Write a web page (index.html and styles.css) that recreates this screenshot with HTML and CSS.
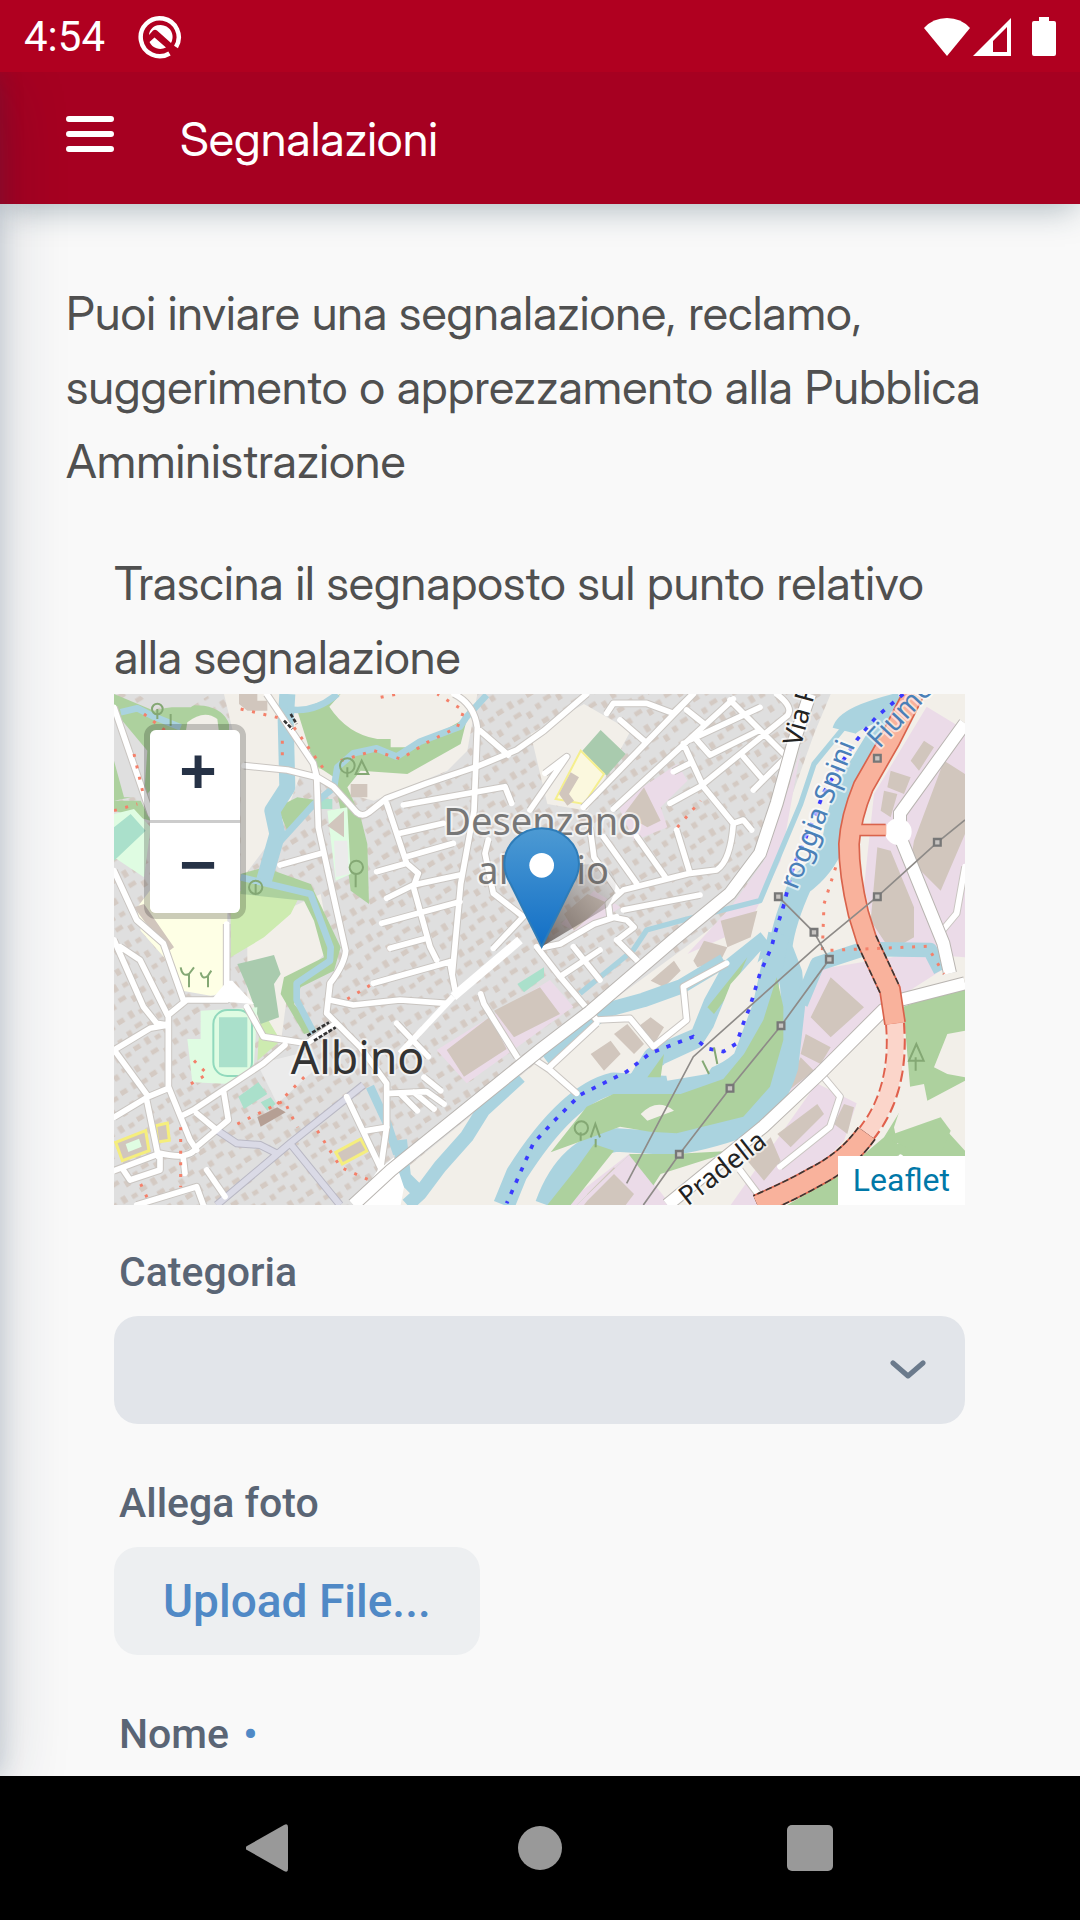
FILE: index.html
```html
<!DOCTYPE html>
<html lang="it">
<head>
<meta charset="utf-8">
<meta name="viewport" content="width=device-width, initial-scale=1">
<title>Segnalazioni</title>
<link rel="stylesheet" href="styles.css">
</head>
<body>
<div class="device">
  <div class="status-bar">
    <span class="clock">4:54</span>
    <svg class="status-logo" viewBox="0 0 44 44" width="44" height="44" aria-hidden="true">
      <path d="M31.500 38.500A19 19 0 1 1 38 32" fill="none" stroke="#fff" stroke-width="4.500"/>
      <path d="M12 16A12 12 0 0 1 33 28L19 15.500q-2-1.500-4 0l-4 4.500q0-2 1-4zM11.500 27l5-4.500L28 32.500a12 12 0 0 1-16.500-5.500z" fill="#fff"/>
    </svg>
    <div class="status-icons">
      <svg viewBox="0 0 46 40" width="46" height="40" aria-hidden="true"><path d="M0 11Q9 1 23 1t23 10L23 39z" fill="#fff"/></svg>
      <svg viewBox="0 0 38 40" width="38" height="40" aria-hidden="true"><path fill-rule="evenodd" d="M0 39L38 1v38zM20 24v11h14V10z" fill="#fff"/></svg>
      <svg class="battery" viewBox="0 0 24 40" width="24" height="40" aria-hidden="true"><path d="M7 0h10v4h5q2 0 2 2v31q0 2-2 2H2q-2 0-2-2V6q0-2 2-2h5z" fill="#fff"/></svg>
    </div>
  </div>

  <div class="app">
    <header class="app-header">
      <button class="menu-button" type="button" aria-label="Menu">
        <svg viewBox="0 0 48 38" width="48" height="38"><path d="M3 4h42M3 19h42M3 34h42" stroke="#fff" stroke-width="6" stroke-linecap="round"/></svg>
      </button>
      <h1 class="app-title">Segnalazioni</h1>
    </header>

    <main class="content">
      <p class="text">Puoi inviare una segnalazione, reclamo, suggerimento o apprezzamento alla Pubblica Amministrazione</p>
      <form class="report-form">
        <p class="text">Trascina il segnaposto sul punto relativo alla segnalazione</p>

        <div class="map">
          <svg class="map-tiles" viewBox="0 0 2553 1533" preserveAspectRatio="xMidYMid slice" role="img" aria-label="Mappa di Albino">
            <defs>
              <pattern id="houses" width="104" height="92" patternUnits="userSpaceOnUse" patternTransform="rotate(-32)">
                <path d="M6 8h22v16H6zM46 4h16v22H46zM78 14h18v14H78zM12 52h16v18H12zM44 46h24v14H44zM80 60h16v20H80z" fill="#d4cac3"/>
              </pattern>
              <linearGradient id="pin" x1="0" y1="0" x2="0" y2="1">
                <stop offset="0" stop-color="#4d9ad3"/><stop offset="1" stop-color="#126fc6"/>
              </linearGradient>
              <linearGradient id="pin-shade" x1="0" y1="1" x2="1" y2="0">
                <stop offset="0" stop-color="#554a45" stop-opacity=".8"/><stop offset="1" stop-color="#554a45" stop-opacity="0"/>
              </linearGradient>
              <g id="streets">
                <path d="M458 0L598 208 608 248 658 278 728 355Q745 370 765 355L818 313 938 268 1088 218 1208 168 1290 110 1418 0M390 215L520 228 608 250 613 400 648 560 695 770Q692 810 648 868L638 958 738 1058 818 1168 818 1298 798 1438"/>
                <path d="M0 40L110 360M1020 0Q1080 30 1090 100L1080 350 1040 570 1015 840M1098 110L1183 183"/>
                <path d="M818 328L878 508 913 538 898 578 948 758 968 798M868 333L1173 278 1193 328M858 418L988 388M878 488L1018 448M788 533L878 508M818 613L898 573 1038 543M803 688L1038 623M828 763L938 733M498 513L623 478M1123 438L1113 478 1138 598 1228 668 1138 763"/>
                <path d="M0 530L68 678 148 748 208 918M0 738L88 938 128 988 163 993M18 758L78 798 163 968V1178L228 1338 248 1368M163 963L218 918H338V690M398 938L448 1028 578 1048 658 993M0 1068L108 1003 163 993M8 1078L103 1208M0 1270L103 1208 163 1183M98 1218L133 1388M513 1053L448 1108 328 1188 238 1248 208 1263M328 1188L343 1278 248 1358Q230 1400 138 1378L0 1430M248 1258L308 1308M208 1393L213 1438M68 1533L248 1478 268 1533M278 1428L333 1508M28 1428L48 1458 138 1428V1388"/>
                <path d="M648 918L718 933 858 918 998 928M1008 808L1023 888M778 868L1008 803M848 988L943 1088M698 1208L798 1418M828 1198L938 1193 990 1230M860 1200L910 1250M900 1195L960 1245M930 1150L980 1190M758 1310L818 1300M1100 900L1110 930 1210 1090"/>
                <path d="M1478 58L1498 28H1598L1678 58 1728 8M1408 340L1738 0M1498 345L1858 15M1518 78L1593 143M1718 48L1768 88M1728 138L1938 40M1748 138L1788 183 1938 108M1848 18L2028 198M1668 328L1758 278 2020 65Q2040 40 1988 0M1708 148L1768 278 1858 388Q1850 500 1808 528L1728 538 1528 588 1483 628 1488 668 1538 678 1560 700 1510 738M1888 188L1948 258M1918 288L2008 198M1678 233L1728 208M1528 648L1758 603M1688 408L1728 538M1568 428L1653 548M1468 428L1568 568M1428 400L1440 490 1510 590M1248 348L1358 188 1293 238M1508 668L1440 690 1338 750 1290 760M1858 388L1888 378 1913 408"/>
                <path d="M1268 758L1338 848 1448 978 1548 973 1618 1058 1718 978 1708 878 1838 808M1338 848L1458 768M1378 758L1458 858M1508 738L1568 798M1308 1118L1448 988M1248 1088L1308 1128 1388 1198M2128 1148L2178 1208 2148 1298 1998 1418M1878 1428L1938 1508M2553 518L2528 658 2478 718M2360 1390L2330 1440"/>
              </g>
              <g id="avenues">
                <path d="M718 1533L830 1430 1278 1068 1428 953 1678 738 1848 598 1938 478 1988 328 2038 148 2088 0"/>
                <path d="M2553 868L2358 918 2308 948 2118 1138 1948 1298 1660 1533M2553 88L2358 358V428L2488 748 2508 838"/>
              </g>
              <path id="primary" d="M2398 0L2328 138 2248 278Q2210 370 2205 450 2205 540 2233 658L2258 738 2328 888 2343 988M2258 1318Q2200 1400 2100 1450 2030 1490 1930 1533"/>
            </defs>

            <rect width="2553" height="1533" fill="#dfdfdf"/>
            <rect width="2553" height="1533" fill="url(#houses)"/>

            <!-- open land -->
            <path fill="#f2efe9" d="M330 0H1090L1060 170 1000 230 780 320 700 300 560 240 500 400 380 560 380 210zM1250 120L1410 30 1550 110 1420 350 1300 330zM400 700L620 600 650 760 520 900 500 1050 400 960zM1300 1080L1440 960 1700 770 1900 620 2000 400 2100 120 2150 0H2553V1533H800L880 1420z"/>
            <path fill="#feffe5" d="M70 640L130 560 340 640V860Q330 900 290 905L205 890 150 790 80 710z"/>
            <path fill="#cdebb0" d="M350 590L560 600 530 660 450 730 350 790zM590 150h40l25 40-15 40-40-10zM440 940L500 1040 430 1100z"/>
            <!-- woods -->
            <path fill="#add19e" d="M0 0L120 50Q200 30 270 35 330 45 345 90L345 140 210 160 100 300 0 320zM0 320L80 320 110 380 0 350zM230 70q80-30 80 50H210z"/>
            <path fill="#dfdfdf" d="M0 50L100 170 90 310 30 310 0 200zM70 0H290L230 40 130 40z"/>
            <path fill="#add19e" d="M550 50L680 0 646 38Q700 120 790 135H830V160L900 160 1060 70 1040 150 880 240 740 230 700 280 740 370 760 450 765 630 710 590 680 350 660 250 600 210z"/>
            <path fill="#add19e" d="M380 540L450 520 590 570 680 760 660 830 560 880 540 930 610 1010 570 1020 500 900 510 850 630 790 600 680 570 620 380 600zM490 340l60-30 70 10-100 90z"/>
            <path fill="#f2efe9" d="M220 85q50-40 90-10l5 40H215z"/>
            <!-- industrial -->
            <path fill="#ebdbe8" d="M968 1068L1308 858 1378 938 1058 1168zM1510 330L1690 210 1720 260 1640 340 1660 400 1560 440zM1340 690L1440 590 1520 640 1400 720zM1720 780L1850 640 1950 500 2060 170 2000 500 1900 700zM2438 38L2553 108V790L2300 770 2250 580 2280 300zM2090 830L2450 770 2480 830 2358 908 2288 958 2020 1240 2060 950zM1348 1533L1548 1378 1670 1533zM2108 1168L2228 1228 2190 1340 2000 1533H1850z"/>
            <path fill="#a9cbae" d="M370 810L480 783 500 840 480 870 495 970 440 990 400 880zM1405 170L1460 108 1535 180 1478 245z"/>
            <path fill="#dffce2" d="M0 360L60 345 110 400 90 550 0 490zM220 1035H260V950L430 940 420 1110 350 1170 235 1165zM640 350L700 340 710 540 665 560z"/>
            <path fill="#aae0cb" d="M0 400L50 360 95 410 0 500zM315 970h85v150h-85zM373 1208L433 1165 460 1200 390 1245zM440 1225l30-15 15 20-25 20zM1210 870L1290 820V850L1230 895zM620 315h35v30h-35z"/>
            <rect x="298" y="948" width="116" height="198" rx="42" fill="none" stroke="#91d9bd" stroke-width="6"/>
            <path fill="#ebebeb" d="M660 440h40l5 100-40 10zM430 1110L550 1080 610 1120 490 1230z"/>
            <path fill="#fbf8de" stroke="#f5ef8d" stroke-width="6" d="M1325 315L1400 170 1470 240 1410 330z"/>
            <path fill="#d1c6bd" d="M1335 300L1370 235 1395 250 1365 300 1380 320 1360 335z"/>
            <path fill="#d1c6bd" stroke="#f5ee7d" stroke-width="9" d="M5 1345L95 1310 105 1370 25 1400zM125 1295l35-8 6 52-35 5zM665 1375L740 1335 760 1370 685 1410z"/>
            <path fill="#dffce2" d="M35 1350l40-16 8 24-40 16z"/>

            <!-- large buildings -->
            <path fill="#d1c6bd" d="M998 1068L1128 968 1178 1065 1050 1148zM1140 950L1278 880 1338 960 1200 1030zM375 30V0H430V20H460V50H400zM640 395L690 350V430zM710 270h50v40h-50zM1530 360L1590 280 1640 380 1600 400zM1350 660L1420 600 1475 625 1380 710zM1820 680L1930 650 1910 730 1840 760zM2090 970L2150 850 2250 940 2150 1030zM2060 1080L2075 1020 2150 1060 2120 1110zM2010 1200L2060 1090 2100 1130zM2400 440L2490 200 2553 240V420L2480 590 2390 500zM2270 680L2290 460 2330 470 2400 640 2400 730 2330 770zM2390 200l40-60 30 20-45 70zM2330 230l60 20-20 50-50-20zM2310 290l40 10-20 70-30-20zM1738 800L1770 740 1840 760 1820 800 1750 820zM1430 1080L1490 1040 1520 1080 1470 1130zM1500 1020L1540 990 1590 1050 1560 1080zM1570 1000L1610 970 1650 1000 1620 1050zM1610 860L1680 800 1700 830 1650 880zM1420 1500L1500 1420 1560 1480 1520 1533H1410zM1990 1320L2110 1230 2130 1260 2030 1360zM1900 1400L1970 1330 2000 1400 1950 1460zM2190 1230L2220 1240 2200 1320 2160 1290zM60 640l30-10 90 130-20 15z"/>
            <path fill="#b59f94" d="M430 1270L490 1240 515 1255 440 1298z"/>

            <!-- water -->
            <g fill="none" stroke="#aad3df" stroke-linejoin="round">
              <path d="M520 0L515 80 520 280 475 350 490 420 450 560" stroke-width="48"/>
              <path d="M520 45Q600 60 670 0M500 440L600 330 660 280 670 220 718 178 788 163 848 188 918 143 1038 98 1058 68 1118 3M380 550L590 600 650 760 648 800 548 868V918L600 1018M20 55L70 43 120 68 200 100" stroke-width="20"/>
              <path d="M2400 10L2290 30 2190 100 2100 210 2060 330 1938 620 1708 678 1598 708 1558 768 1398 898" stroke-width="16"/>
              <path d="M2360 30Q2200 70 2190 110" stroke-width="70"/>
              <path d="M2330 70L2220 250Q2170 350 2160 440 2130 520 2060 570 2010 680 2000 760L2030 838 2038 938 2018 1118Q1980 1240 1900 1290 1760 1340 1668 1348L1508 1338Q1360 1360 1298 1533" stroke-width="70"/>
              <path d="M1995 720L1948 938 1888 1098Q1800 1180 1648 1178L1498 1168Q1360 1200 1208 1440L1170 1533M1960 740L1860 820 1800 930 1760 1030 1620 1090 1570 1170" stroke-width="65"/>
              <path d="M2060 930L2110 810 2248 765 2448 768 2480 830M1290 1090L1478 948 1588 918 1700 878 1830 800" stroke-width="44"/>
              <path d="M1218 1148L1108 1248 1058 1328 978 1418 918 1498 880 1533M858 1338L870 1450 920 1500" stroke-width="42"/>
              <path d="M768 1178L820 1290 850 1380" stroke-width="26"/>
            </g>
            <path fill="#add19e" d="M1988 850L2008 938 2008 1038 1968 1178 1888 1268 1688 1318 1608 1313 1518 1298 1438 1328 1310 1375 1418 1238 1498 1200H1700L1828 1155 1890 1080 1948 978zM1388 1533L1548 1380 1678 1380 1860 1370 1640 1440 1580 1533zM1300 1533L1390 1420 1440 1350 1500 1370 1370 1533zM1780 940L1900 790 1860 880 1800 960zM1600 1150L1650 1080 1640 1150z"/>
            <path fill="#f2efe9" d="M1798 1000L1850 870 1940 770 1890 960 1800 1060 1740 1090zM1650 1110L1780 1050 1820 1080 1780 1140 1660 1160zM1580 1260q50-50 100-10l-80 30z"/>
            <path fill="#ebdbe8" d="M1388 1533L1545 1382 1665 1533z"/>
            <path fill="#d1c6bd" d="M1420 1520L1500 1440 1560 1500 1535 1533H1410z"/>
            <path fill="#add19e" d="M2368 938L2508 888H2553V1533H2020L2180 1440 2310 1330 2390 1200z"/>
            <path fill="#f2efe9" d="M2460 1120L2500 1020 2553 1010V1150L2500 1140zM2380 1180L2430 1170 2440 1220 2553 1160V1370L2480 1290 2350 1350 2340 1300z"/>
            <path fill="#add19e" d="M2310 1330L2480 1270 2510 1310 2480 1380 2400 1370z"/>

            <!-- roads -->
            <use href="#streets" fill="none" stroke="#c9c5c1" stroke-width="23" stroke-linejoin="round"/>
            <path d="M308 1533L528 1348 748 1173M528 1348L678 1533M308 1308L368 1348 438 1353 488 1378" fill="none" stroke="#b9b8c4" stroke-width="24"/>
            <path d="M308 1533L528 1348 748 1173M528 1348L678 1533M308 1308L368 1348 438 1353 488 1378" fill="none" stroke="#dadae6" stroke-width="18"/>
            <use href="#streets" fill="none" stroke="#fff" stroke-width="17" stroke-linejoin="round" stroke-linecap="round"/>
            <path d="M1218 738L1018 908" fill="none" stroke="#fff" stroke-width="26"/>
            <path d="M1018 908L858 1078" fill="none" stroke="#fff" stroke-width="18"/>
            <path fill="#fff" d="M290 920L340 860H355L420 930zM790 1430l50-40 30 90-10 53H720z"/>
            <use href="#avenues" fill="none" stroke="#b9b5b1" stroke-width="42"/>
            <use href="#avenues" fill="none" stroke="#fff" stroke-width="36"/>
            <circle cx="2353" cy="413" r="40" fill="#fff"/>

            <path d="M2343 988Q2360 1190 2258 1318" fill="none" stroke="#e0604c" stroke-width="60" stroke-dasharray="32 14"/>
            <path d="M2343 988Q2360 1190 2258 1318" fill="none" stroke="#fbd5ca" stroke-width="48"/>
            <path d="M2220 408H2315" stroke="#d9634c" stroke-width="38"/>
            <use href="#primary" fill="none" stroke="#d9634c" stroke-width="66"/>
            <path d="M2258 738L2328 888M2258 1318Q2200 1400 2100 1450 2030 1490 1930 1533" fill="none" stroke="#3c3431" stroke-width="66" stroke-dasharray="20 8"/>
            <path d="M2220 408H2317" stroke="#f9b29c" stroke-width="28"/>
            <use href="#primary" fill="none" stroke="#f9b29c" stroke-width="56"/>

            <!-- paths, river boundary and power lines -->
            <path d="M90 60L180 130M60 180L90 310M0 350L70 330M380 45L510 75M505 140V200M540 100L640 240M680 200L780 170 860 195 940 145 1030 100 1050 50 970 0M800 10L850 0M1690 400L1760 320M2165 520L2130 630 2125 770 2440 757 2490 840M700 915L778 868M240 1100L280 1140 230 1170M370 1290L510 1220 550 1300M610 1310L680 1420 770 1460M490 1230L580 1140M200 1300V1480M80 1470L110 1533" fill="none" stroke="#f4806a" stroke-width="9" stroke-dasharray="9 26"/>
            <path d="M2368 0L2288 68 2228 138 2188 198 2128 298 2098 378 2038 518 2008 638 1983 718 1973 758 1938 838 1908 938 1888 988 1868 1048 1828 1073 1778 1063 1738 1028 1608 1078 1538 1133 1398 1203 1318 1283 1258 1348 1178 1528" fill="none" stroke="#3a3aff" stroke-width="11" stroke-dasharray="13 24"/>
            <path d="M2553 378L2470 445 2290 608 2108 758 1738 1088 1648 1258 1538 1468M1993 608L2100 715 2146 796 2001 995 1848 1183 1696 1381 1588 1533" fill="none" stroke="#8e8b88" stroke-width="5"/>
            <path d="M2460 435h20v20h-20zM2280 598h20v20h-20zM2280 183h20v20h-20zM1983 598h20v20h-20zM2090 705h20v20h-20zM2136 786h20v20h-20zM1991 985h20v20h-20zM1838 1173h20v20h-20zM1686 1371h20v20h-20z" fill="#c8c5c2" stroke="#777" stroke-width="7"/>
            <path d="M580 1025L645 985M600 1040L665 1000M510 80l25 25M530 60l18 30" stroke="#333" stroke-width="8" stroke-dasharray="12 5"/>
            <g fill="none" stroke="#84a874" stroke-width="6">
              <path d="M130 75v-30M170 95v-35M700 250v-30M425 600v-30M725 580v-40M1400 1340v-25M1445 1360v-25M2405 1130v-40M1785 1140l-20-40M1810 1110l-10-50"/>
              <circle cx="130" cy="45" r="16"/><circle cx="700" cy="215" r="22"/><circle cx="425" cy="580" r="20"/><circle cx="727" cy="520" r="20"/><circle cx="1402" cy="1302" r="20"/>
              <path d="M725 240l18-40 20 40zM1430 1330l14-40 14 40M2385 1100l22-50 22 50zM200 820q5 30 25 20v40M225 840l15-20M260 835q5 25 22 10v35M282 845l10-15"/>
            </g>

            <!-- place names -->
            <g class="place place-area">
              <text x="988" y="422">Desenzano</text>
              <text x="1090" y="570">al Serio</text>
            </g>
            <text class="place place-town" x="530" y="1141">Albino</text>
            <text class="place place-street" transform="translate(2060 160) rotate(-75)">Via P</text>
            <text class="place place-street" text-anchor="end" transform="translate(1962 1350) rotate(-38)">Pradella</text>
            <text class="place place-water" transform="translate(2048 590) rotate(-68)">roggia Spini</text>
            <text class="place place-water" transform="translate(2296 166) rotate(-47)">Fiume</text>

            <!-- marker -->
            <path d="M1283 758L1330 560Q1380 490 1480 520 1530 560 1480 640z" fill="url(#pin-shade)"/>
            <path d="M1283 758L1190 570Q1171 540 1171 510A112 107 0 0 1 1395 510Q1395 540 1376 570z" fill="url(#pin)" stroke="#2e7cb8" stroke-width="6"/>
            <circle cx="1283" cy="514" r="37" fill="#fff"/>
          </svg>
          <div class="zoom-control">
            <button class="zoom-button" type="button" aria-label="Zoom in">+</button>
            <button class="zoom-button" type="button" aria-label="Zoom out">−</button>
          </div>
          <a class="attribution" href="#leaflet">Leaflet</a>
        </div>

        <div class="field">
          <label class="label" for="categoria">Categoria</label>
          <div class="select-box">
            <select class="select" id="categoria"><option value=""></option></select>
            <svg class="chevron" viewBox="0 0 36 20" width="36" height="20" aria-hidden="true"><path d="M3 3l15 13L33 3" fill="none" stroke="#6b7a8c" stroke-width="5" stroke-linecap="round" stroke-linejoin="round"/></svg>
          </div>
        </div>
        <div class="field">
          <label class="label" for="foto">Allega foto</label>
          <button class="upload" id="foto" type="button">Upload File...</button>
        </div>
        <div class="field">
          <label class="label" for="nome">Nome <span class="required">•</span></label>
          <input class="input" id="nome" type="text" required>
        </div>
      </form>
    </main>
  </div>

  <nav class="system-nav" aria-label="Sistema">
    <button class="nav-button" type="button" aria-label="Indietro"><svg viewBox="0 0 48 50" width="48" height="50"><path d="M1 23L38 2q4-2 4 2v42q0 4-4 2L1 27q-3-2 0-4z" fill="#999"/></svg></button>
    <button class="nav-button" type="button" aria-label="Home"><svg viewBox="0 0 48 50" width="48" height="50"><circle cx="24" cy="25" r="22" fill="#999"/></svg></button>
    <button class="nav-button" type="button" aria-label="Recenti"><svg viewBox="0 0 48 50" width="48" height="50"><rect x="1" y="2" width="46" height="46" rx="5" fill="#999"/></svg></button>
  </nav>
</div>
</body>
</html>
```
FILE: styles.css
```css
* {
  box-sizing: border-box;
}

body {
  margin: 0;
  background: #f9f9f9;
  color: #505050;
  font-family: "Inter Display", Inter, "Liberation Sans", sans-serif;
}

button {
  border: 0;
  padding: 0;
  background: none;
  cursor: pointer;
}

svg {
  display: block;
}

.device {
  display: grid;
  grid-template-rows: auto minmax(0, 1fr) auto;
  height: 100vh;
}

.status-bar {
  display: flex;
  align-items: center;
  height: 72px;
  padding: 2px 24px 0;
  background: #b00020;
  color: #fff;
}

.clock {
  font: 400 42px/72px Roboto, sans-serif;
}

.status-logo {
  margin-left: 33px;
}

.status-icons {
  display: flex;
  gap: 3px;
  margin-left: auto;
}

.battery {
  margin-left: 18px;
}

.app {
  position: relative;
  overflow: hidden;
}

/* edge shadow cast by the closed drawer */
.app::before {
  content: "";
  position: absolute;
  z-index: 2;
  top: 0;
  bottom: 0;
  left: -40px;
  width: 40px;
  box-shadow: 0 0 24px rgba(27, 60, 95, .2), 0 12px 68px rgba(27, 43, 65, .22);
}

.app-header {
  position: relative;
  z-index: 1;
  display: flex;
  align-items: center;
  gap: 66px;
  height: 132px;
  padding: 0 66px;
  background: #a60021;
  color: #fff;
  box-shadow: 0 8px 32px -4px rgba(27, 60, 80, .36);
}

.menu-button {
  padding-bottom: 8px;
}

.app-title {
  margin: 0;
  font-size: 47px;
  font-weight: 400;
}

.content {
  padding: 72px 66px 0;
}

.text {
  margin: 0;
  font-size: 47px;
  font-weight: 400;
  line-height: 74px;
}

.report-form {
  margin: 48px 49px 0 48px;
}

.map {
  position: relative;
  height: 511px;
  margin-bottom: 44px;
  overflow: hidden;
}

.map-tiles {
  width: 100%;
  height: 100%;
}

.place {
  font-family: "Noto Sans", sans-serif;
  paint-order: stroke;
  stroke: rgba(255, 255, 255, .6);
  stroke-width: 12px;
  stroke-linejoin: round;
}

.place-area {
  font-size: 114px;
  fill: #777;
}

.place-town {
  font-size: 134px;
  fill: #333;
}

.place-street {
  font-size: 80px;
  fill: #222;
}

.place-water {
  font-size: 84px;
  fill: #4a80b8;
}

.zoom-control {
  position: absolute;
  top: 30px;
  left: 30px;
  display: flex;
  flex-direction: column;
  border: 6px solid rgba(0, 0, 0, .2);
  border-radius: 12px;
}

.zoom-button {
  width: 90px;
  height: 90px;
  padding: 0 0 10px 6px;
  background: #fff;
  color: #263246;
  font: 700 60px/72px "DejaVu Sans Mono", monospace;
}

.zoom-button:first-child {
  height: 93px;
  border-bottom: 3px solid #ccc;
  border-radius: 6px 6px 0 0;
}

.zoom-button:last-child {
  border-radius: 0 0 6px 6px;
}

.attribution {
  position: absolute;
  right: 0;
  bottom: 0;
  padding: 0 15px;
  background: #fff;
  color: #0078a8;
  font: 400 32px/49px Roboto, sans-serif;
  text-decoration: none;
}

.field {
  margin-bottom: 56px;
}

.label {
  display: block;
  margin-bottom: 21px;
  padding-left: 5px;
  color: #5a6575;
  font: 500 41px/46px Roboto, sans-serif;
}

.required {
  margin-left: 4px;
  color: #5089c6;
}

.select-box {
  display: flex;
  align-items: center;
  position: relative;
}

.select,
.input {
  width: 100%;
  height: 108px;
  padding: 0 36px;
  border: 0;
  border-radius: 24px;
  background: #e2e5ea;
  appearance: none;
  color: #263246;
  font: 400 46px/60px Roboto, sans-serif;
}

.chevron {
  position: absolute;
  right: 39px;
  pointer-events: none;
}

.upload {
  height: 108px;
  padding: 0 49px;
  border-radius: 24px;
  background: #edeff1;
  color: #5089c6;
  font: 500 46px/60px Roboto, sans-serif;
}

.system-nav {
  z-index: 3;
  display: flex;
  align-items: center;
  justify-content: center;
  gap: 222px;
  height: 144px;
  background: #000;
}
```
